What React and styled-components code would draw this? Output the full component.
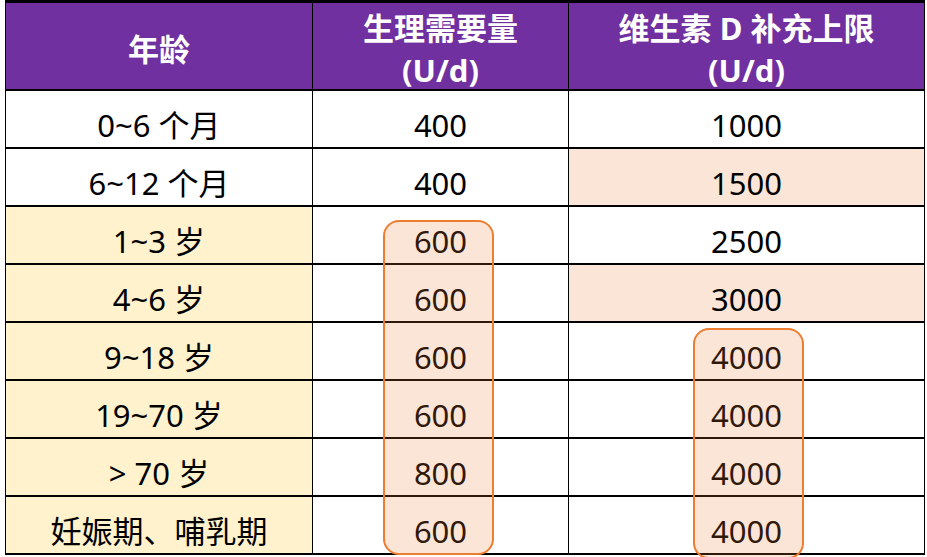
import React from "react";
import styled, { createGlobalStyle } from "styled-components";

const Global = createGlobalStyle`
  html, body { margin: 0; padding: 0; background: #ffffff; }
  body { font-family: "Noto Sans", "Noto Sans CJK SC", sans-serif; }
`;

const Page = styled.div`
  padding-left: 5px;
  width: 927px;
  height: 557px;
  box-sizing: border-box;
  overflow: hidden;
`;

const Table = styled.div`
  position: relative;
  width: 920px;
  border-top: 3px solid #000;
  border-left: 1px solid #000;
  border-right: 1px solid #000;
  box-sizing: border-box;
`;

const Row = styled.div`
  display: grid;
  grid-template-columns: 306px 256px 356px;
  border-bottom: 2px solid #000;
  height: ${(p) => (p.$header ? "86px" : "56px")};
  background: ${(p) => (p.$header ? "#7030A0" : "#ffffff")};
`;

const HeadCell = styled.div`
  display: flex;
  flex-direction: column;
  align-items: center;
  justify-content: center;
  padding-top: 4px;
  box-sizing: border-box;
  color: #ffffff;
  font-family: "Noto Sans", "Noto Sans CJK SC", sans-serif;
  font-weight: 700;
  font-size: 31px;
  line-height: 42px;
  border-left: ${(p) => (p.$first ? "none" : "1px solid #000")};
  white-space: nowrap;
`;

const Cell = styled.div`
  display: flex;
  justify-content: center;
  padding-top: 13px;
  box-sizing: border-box;
  font-family: "Noto Sans", "Noto Sans CJK SC", sans-serif;
  font-size: 31px;
  line-height: 43px;
  color: #000;
  white-space: nowrap;
  background: ${(p) =>
    p.$tone === "yellow" ? "#FFF2CC" : p.$tone === "peach" ? "#FBE5D6" : "#ffffff"};
  border-left: ${(p) => (p.$first ? "none" : "1px solid #000")};
`;

const Highlight = styled.div`
  position: absolute;
  box-sizing: border-box;
  border: 2px solid #ED7D31;
  border-radius: 16px;
  background: rgba(237, 125, 49, 0.2);
  pointer-events: none;
`;

const rows = [
  { age: "0~6 个月", need: "400", max: "1000" },
  { age: "6~12 个月", need: "400", max: "1500", maxTone: "peach" },
  { age: "1~3 岁", need: "600", max: "2500", ageTone: "yellow" },
  { age: "4~6 岁", need: "600", max: "3000", ageTone: "yellow", maxTone: "peach" },
  { age: "9~18 岁", need: "600", max: "4000", ageTone: "yellow" },
  { age: "19~70 岁", need: "600", max: "4000", ageTone: "yellow" },
  { age: "> 70 岁", need: "800", max: "4000", ageTone: "yellow" },
  { age: "妊娠期、哺乳期", need: "600", max: "4000", ageTone: "yellow" },
];

export default function App() {
  return (
    <>
      <Global />
      <Page>
        <Table>
          <Row $header>
            <HeadCell $first>年龄</HeadCell>
            <HeadCell>
              <span>生理需要量</span>
              <span>(U/d)</span>
            </HeadCell>
            <HeadCell>
              <span>维生素 D 补充上限</span>
              <span>(U/d)</span>
            </HeadCell>
          </Row>
          {rows.map((r) => (
            <Row key={r.age}>
              <Cell $first $tone={r.ageTone}>{r.age}</Cell>
              <Cell>{r.need}</Cell>
              <Cell $tone={r.maxTone}>{r.max}</Cell>
            </Row>
          ))}
          <Highlight style={{ left: 377, top: 217, width: 111, height: 335 }} />
          <Highlight style={{ left: 687, top: 325, width: 111, height: 231 }} />
        </Table>
      </Page>
    </>
  );
}
